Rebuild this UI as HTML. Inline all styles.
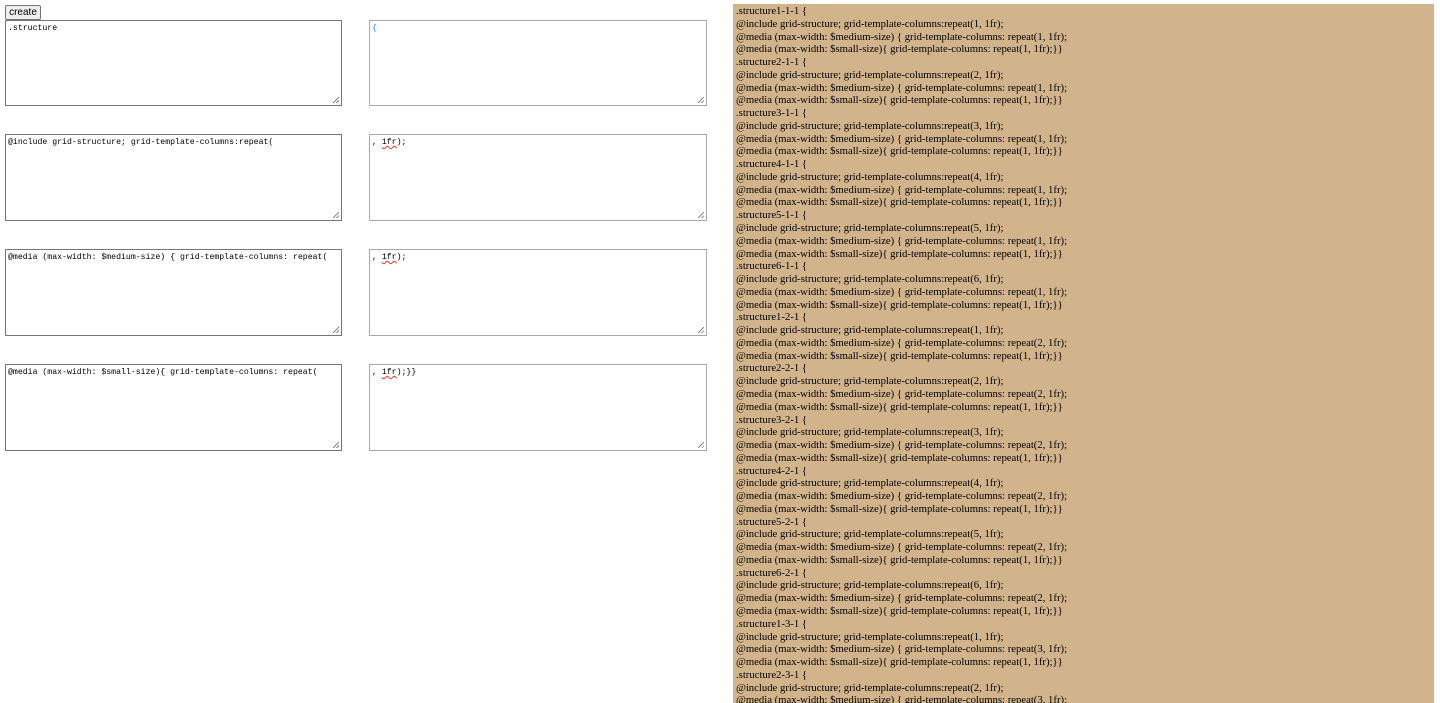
<!DOCTYPE html>
<html><head><meta charset="utf-8"><style>
body{margin:0;width:1440px;height:703px;overflow:hidden;background:#fff;position:relative;font-family:"Liberation Sans",sans-serif}
button{position:absolute;left:5px;top:5px;width:36px;height:15px;font:10px "Liberation Sans",sans-serif;padding:0;background:#efefef;border:1px solid #767676;border-radius:2px;color:#000;line-height:12px}
.ta{position:absolute;width:337px;height:85px;border:1px solid #767676;box-sizing:border-box;background:#fff;font:8.2px/11px "Liberation Mono",monospace;padding:2px 2px;color:#000;white-space:pre;overflow:hidden}
.ta.r{border-color:#aaa;width:338px}
.ta::after{content:"";position:absolute;right:2px;bottom:2px;width:6px;height:6px;background:linear-gradient(135deg,transparent 45%,#888 45%,#888 55%,transparent 55%,transparent 75%,#888 75%,#888 85%,transparent 85%)}
u{text-decoration:underline wavy #e33;text-decoration-thickness:1px}
#p{position:absolute;left:733px;top:4px;width:701px;height:699px;background:#d2b48c;font:10.7px/12.77px "Liberation Serif",serif;color:#000;overflow:hidden;white-space:pre;padding-left:3px;padding-top:1px;box-sizing:border-box}
</style></head><body>
<button>create</button>
<div class="ta" style="left:5px;top:20px;height:86px">.structure</div>
<div class="ta r" style="left:369px;top:20px;height:86px"><span style="color:#39c">{</span></div>
<div class="ta" style="left:5px;top:134px;height:87px">@include grid-structure; grid-template-columns:repeat(</div>
<div class="ta r" style="left:369px;top:134px;height:87px">, <u>1fr</u>);</div>
<div class="ta" style="left:5px;top:249px;height:87px">@media (max-width: $medium-size) { grid-template-columns: repeat(</div>
<div class="ta r" style="left:369px;top:249px;height:87px">, <u>1fr</u>);</div>
<div class="ta" style="left:5px;top:364px;height:87px">@media (max-width: $small-size){ grid-template-columns: repeat(</div>
<div class="ta r" style="left:369px;top:364px;height:87px">, <u>1fr</u>);}}</div>
<div id="p">.structure1-1-1 {
@include grid-structure; grid-template-columns:repeat(1, 1fr);
@media (max-width: $medium-size) { grid-template-columns: repeat(1, 1fr);
@media (max-width: $small-size){ grid-template-columns: repeat(1, 1fr);}}
.structure2-1-1 {
@include grid-structure; grid-template-columns:repeat(2, 1fr);
@media (max-width: $medium-size) { grid-template-columns: repeat(1, 1fr);
@media (max-width: $small-size){ grid-template-columns: repeat(1, 1fr);}}
.structure3-1-1 {
@include grid-structure; grid-template-columns:repeat(3, 1fr);
@media (max-width: $medium-size) { grid-template-columns: repeat(1, 1fr);
@media (max-width: $small-size){ grid-template-columns: repeat(1, 1fr);}}
.structure4-1-1 {
@include grid-structure; grid-template-columns:repeat(4, 1fr);
@media (max-width: $medium-size) { grid-template-columns: repeat(1, 1fr);
@media (max-width: $small-size){ grid-template-columns: repeat(1, 1fr);}}
.structure5-1-1 {
@include grid-structure; grid-template-columns:repeat(5, 1fr);
@media (max-width: $medium-size) { grid-template-columns: repeat(1, 1fr);
@media (max-width: $small-size){ grid-template-columns: repeat(1, 1fr);}}
.structure6-1-1 {
@include grid-structure; grid-template-columns:repeat(6, 1fr);
@media (max-width: $medium-size) { grid-template-columns: repeat(1, 1fr);
@media (max-width: $small-size){ grid-template-columns: repeat(1, 1fr);}}
.structure1-2-1 {
@include grid-structure; grid-template-columns:repeat(1, 1fr);
@media (max-width: $medium-size) { grid-template-columns: repeat(2, 1fr);
@media (max-width: $small-size){ grid-template-columns: repeat(1, 1fr);}}
.structure2-2-1 {
@include grid-structure; grid-template-columns:repeat(2, 1fr);
@media (max-width: $medium-size) { grid-template-columns: repeat(2, 1fr);
@media (max-width: $small-size){ grid-template-columns: repeat(1, 1fr);}}
.structure3-2-1 {
@include grid-structure; grid-template-columns:repeat(3, 1fr);
@media (max-width: $medium-size) { grid-template-columns: repeat(2, 1fr);
@media (max-width: $small-size){ grid-template-columns: repeat(1, 1fr);}}
.structure4-2-1 {
@include grid-structure; grid-template-columns:repeat(4, 1fr);
@media (max-width: $medium-size) { grid-template-columns: repeat(2, 1fr);
@media (max-width: $small-size){ grid-template-columns: repeat(1, 1fr);}}
.structure5-2-1 {
@include grid-structure; grid-template-columns:repeat(5, 1fr);
@media (max-width: $medium-size) { grid-template-columns: repeat(2, 1fr);
@media (max-width: $small-size){ grid-template-columns: repeat(1, 1fr);}}
.structure6-2-1 {
@include grid-structure; grid-template-columns:repeat(6, 1fr);
@media (max-width: $medium-size) { grid-template-columns: repeat(2, 1fr);
@media (max-width: $small-size){ grid-template-columns: repeat(1, 1fr);}}
.structure1-3-1 {
@include grid-structure; grid-template-columns:repeat(1, 1fr);
@media (max-width: $medium-size) { grid-template-columns: repeat(3, 1fr);
@media (max-width: $small-size){ grid-template-columns: repeat(1, 1fr);}}
.structure2-3-1 {
@include grid-structure; grid-template-columns:repeat(2, 1fr);
@media (max-width: $medium-size) { grid-template-columns: repeat(3, 1fr);
@media (max-width: $small-size){ grid-template-columns: repeat(1, 1fr);}}</div>
</body></html>
